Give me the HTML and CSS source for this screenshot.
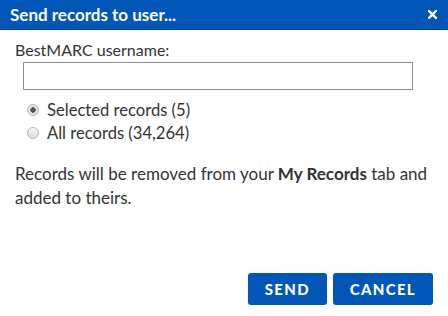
FILE: index.html
```html
<!DOCTYPE html>
<html lang="en">
<head>
    <meta charset="UTF-8">
    <meta name="viewport" content="width=device-width, initial-scale=1.0">
    <title>Send records to user</title>
    <link rel="stylesheet" href="styles.css">
</head>
<body>
    <div class="dialog">
        <div class="dialog-header">
            <span class="dialog-title">Send records to user...</span>
            <button class="close" aria-label="Close">
                <svg width="9" height="9" viewBox="0 0 9 9">
                    <path d="M1 1 L8 8 M8 1 L1 8" stroke="#fff" stroke-width="2.4" stroke-linecap="square"/>
                </svg>
            </button>
        </div>
        <div class="dialog-body">
            <label class="field-label" for="username">BestMARC username:</label>
            <input type="text" id="username" class="field-input">
            <div class="choices">
                <label class="choice">
                    <input type="radio" name="scope" checked>
                    <span>Selected records (5)</span>
                </label>
                <label class="choice">
                    <input type="radio" name="scope">
                    <span>All records (34,264)</span>
                </label>
            </div>
            <p class="note">Records will be removed from your <strong>My Records</strong> tab and added to theirs.</p>
        </div>
        <div class="dialog-footer">
            <button class="btn">SEND</button>
            <button class="btn">CANCEL</button>
        </div>
    </div>
</body>
</html>
```

FILE: styles.css
```css
body {
    margin: 0;
    font-family: 'Lato', 'Open Sans', sans-serif;
    background-color: #fff;
    color: #333;
}

.dialog {
    display: flex;
    flex-direction: column;
    height: 316px;
}

.dialog-header {
    display: flex;
    align-items: center;
    justify-content: space-between;
    height: 29px;
    padding: 0 10px;
    background-color: #0156b8;
    border-bottom: 1px solid #0149a0;
}

.dialog-title {
    color: #fff;
    font-weight: bold;
    font-size: 17px;
}

.close {
    display: flex;
    padding: 0;
    margin-right: 1px;
    border: none;
    background: none;
    cursor: pointer;
}

.dialog-body {
    flex: 1;
    padding: 10px 15px 0;
}

.field-label {
    display: block;
    font-size: 16px;
    line-height: 20px;
}

.field-input {
    display: block;
    box-sizing: border-box;
    width: 390px;
    height: 28px;
    margin: 2px 0 0 8px;
    border: 1px solid #8c8c8c;
    font-size: 14px;
}

.choices {
    display: flex;
    flex-direction: column;
    gap: 3px;
    margin: 10px 0 0 12px;
}

.choice {
    display: flex;
    align-items: center;
    gap: 8px;
    font-size: 16.6px;
    line-height: 20px;
}

.choice input {
    appearance: none;
    width: 12px;
    height: 12px;
    margin: 0;
    border: 1px solid #b5b5b5;
    border-radius: 50%;
    background: linear-gradient(#f7f7f7, #dcdcdc);
}

.choice input:checked {
    background: radial-gradient(circle, #555 0, #555 2.5px, #e6e6e6 3px);
}

.note {
    margin: 19px 0 0;
    font-size: 17px;
    line-height: 24px;
}

.note strong {
    font-weight: bold;
}

.dialog-footer {
    display: flex;
    justify-content: flex-end;
    gap: 6px;
    padding: 0 15px 11px;
}

.btn {
    height: 32px;
    padding: 0 17px;
    border: none;
    border-radius: 3px;
    background-color: #0156b8;
    color: #fff;
    font-family: 'Lato', 'Open Sans', sans-serif;
    font-weight: 900;
    font-size: 15px;
    letter-spacing: 1.3px;
    cursor: pointer;
}
```
